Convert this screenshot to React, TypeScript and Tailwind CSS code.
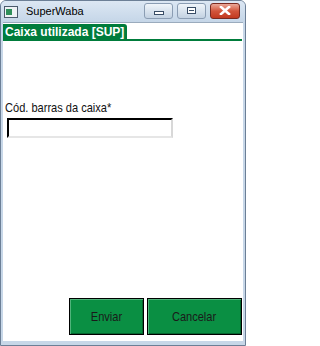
import React from 'react';

const font = { fontFamily: '"Liberation Sans", Arial, sans-serif' };

const TitleButton: React.FC<{ kind: 'min' | 'max' | 'close' }> = ({ kind }) => {
  if (kind === 'close') {
    return (
      <div className="w-[30px] h-[16px] rounded-[3px] border border-[#7a2a20] bg-gradient-to-b from-[#eaa898] via-[#d2553b] to-[#c2391f] flex items-center justify-center">
        <svg width="12" height="9" viewBox="0 0 12 9">
          <path d="M2 1 L10 8 M10 1 L2 8" stroke="#fff" strokeWidth="2.6" strokeLinecap="square" />
        </svg>
      </div>
    );
  }
  return (
    <div className="w-[29px] h-[16px] rounded-[3px] border border-[#8b9db3] bg-gradient-to-b from-[#f0f5fa] via-[#d9e3ee] to-[#c3d2e2] flex items-center justify-center">
      {kind === 'min' ? (
        <div className="w-[10px] h-[4px] mt-[5px] border border-[#394d66] bg-white" />
      ) : (
        <div className="w-[9px] h-[7px] border border-[#394d66] bg-white flex items-center justify-center">
          <div className="w-[5px] h-[1px] bg-[#394d66]" />
        </div>
      )}
    </div>
  );
};

export default function App() {
  return (
    <div
      className="w-[246px] h-[346px] bg-[#c7d7e8] flex flex-col border border-[#6c7f96] rounded-t-[6px] overflow-hidden"
      style={font}
    >
      {/* Title bar */}
      <div className="h-[21px] flex items-center pl-[3px] pr-[5px] bg-gradient-to-b from-[#dce7f3] to-[#c5d6e8]">
        <div className="w-[14px] h-[12px] border border-[#4a5a6c] bg-[#eef2f5] flex items-start">
          <div className="w-[6px] h-[6px] bg-[#2f8f5a] mt-[2px] ml-[1px]" />
        </div>
        <span className="ml-[8px] text-[11px] text-black">SuperWaba</span>
        <div className="ml-auto flex items-center gap-[4px] -mt-[2px]">
          <TitleButton kind="min" />
          <TitleButton kind="max" />
          <TitleButton kind="close" />
        </div>
      </div>

      {/* Client area */}
      <div className="flex-1 mx-[2px] mb-[4px] bg-white flex flex-col border-t border-[#9aabbd]">
        <div className="mt-[1px] flex flex-col">
          <div className="self-start bg-[#007c3b] text-white text-[12px] font-bold leading-[14px] pl-[2px] pr-[3px] pt-[1px] rounded-tr-[3px]">
            Caixa utilizada [SUP]
          </div>
          <div className="h-[2px] bg-[#007c3b] mr-[1px]" />
        </div>

        <div className="mt-[60px] px-[2px] flex flex-col items-start">
          <label className="inline-block origin-left scale-x-[0.85] whitespace-nowrap text-[13px] leading-[14px] text-[#111]">
            Cód. barras da caixa*
          </label>
          <div className="mt-[3px] ml-[2px] w-[166px] h-[20px] bg-white border-[2px] border-t-[#000] border-l-[#000] border-b-[#e6e6e6] border-r-[#d8d8d8]" />
        </div>

        <div className="mt-auto mb-[6px] flex justify-end gap-[3px] pr-[1px]">
          <button className="w-[75px] h-[37px] bg-[#0a8f43] border border-black shadow-[inset_1px_1px_0_#4fb47a,inset_-1px_-1px_0_#05662f] text-[13px] text-[#1a1a1a]">
            <span className="inline-block scale-x-[0.85]">Enviar</span>
          </button>
          <button className="w-[95px] h-[37px] bg-[#0a8f43] border border-black shadow-[inset_1px_1px_0_#4fb47a,inset_-1px_-1px_0_#05662f] text-[13px] text-[#1a1a1a]">
            <span className="inline-block scale-x-[0.85]">Cancelar</span>
          </button>
        </div>
      </div>
    </div>
  );
}
